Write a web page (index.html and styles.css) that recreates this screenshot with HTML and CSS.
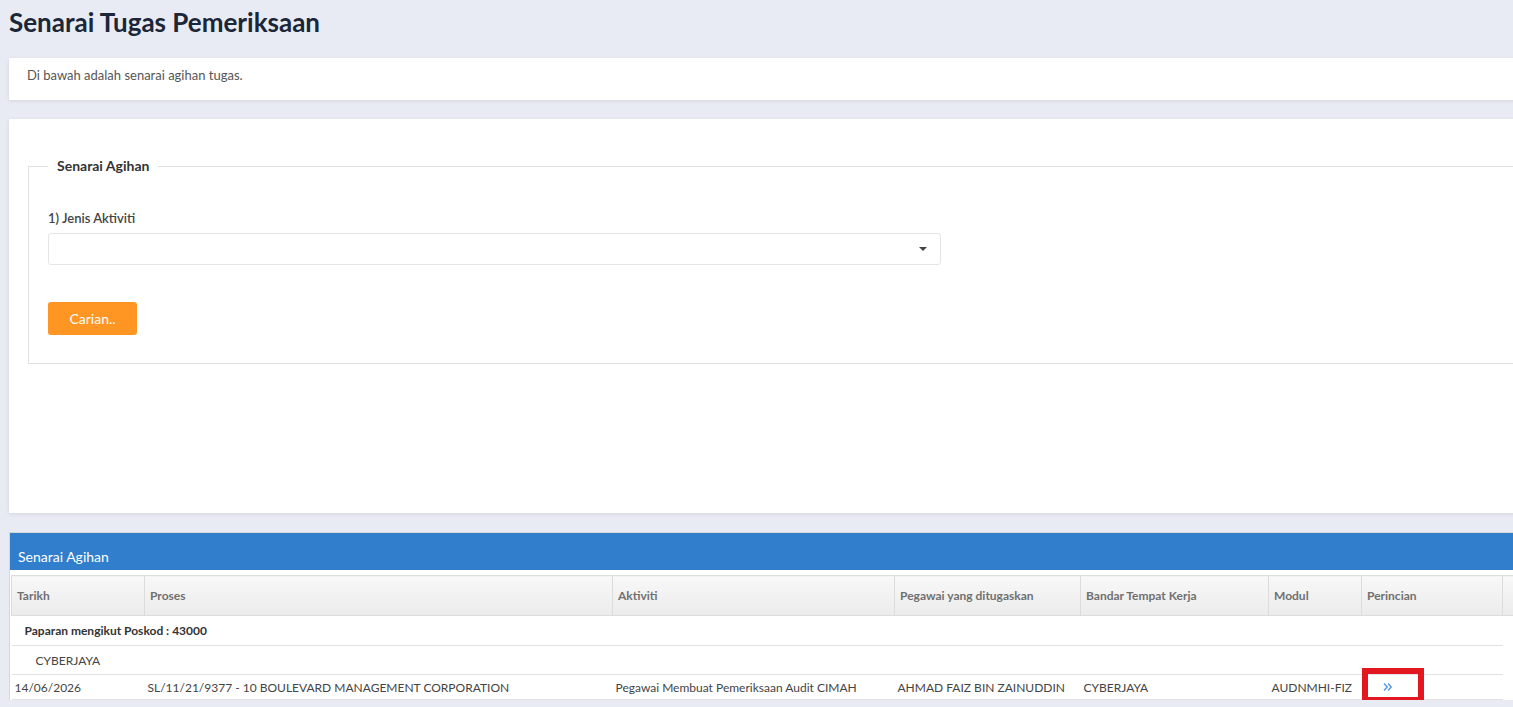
FILE: index.html
```html
<!DOCTYPE html>
<html lang="ms">
<head>
  <meta charset="UTF-8" />
  <meta name="viewport" content="width=device-width, initial-scale=1.0"/>
  <title>Senarai Tugas Pemeriksaan</title>
  <link rel="stylesheet" href="styles.css">
</head>
<body>
  <div class="page">
    <h1 class="page-title">Senarai Tugas Pemeriksaan</h1>

    <div class="card card-intro">Di bawah adalah senarai agihan tugas.</div>

    <div class="card card-search">
      <fieldset class="search-box">
        <legend>Senarai Agihan</legend>
        <label class="field-label" for="jenis">1) Jenis Aktiviti</label>
        <div class="select">
          <select id="jenis"><option></option></select>
          <span class="caret"></span>
        </div>
        <button type="button" class="btn-search">Carian..</button>
      </fieldset>
    </div>

    <div class="panel">
      <div class="panel-heading">Senarai Agihan</div>
      <div class="panel-body">
        <table class="grid">
          <thead>
            <tr>
              <th class="c-tarikh">Tarikh</th>
              <th class="c-proses">Proses</th>
              <th class="c-aktiviti">Aktiviti</th>
              <th class="c-pegawai">Pegawai yang ditugaskan</th>
              <th class="c-bandar">Bandar Tempat Kerja</th>
              <th class="c-modul">Modul</th>
              <th class="c-perincian">Perincian</th>
              <th class="c-gutter"></th>
            </tr>
          </thead>
          <tbody>
            <tr class="row-group">
              <td colspan="7">Paparan mengikut Poskod : 43000</td>
            </tr>
            <tr class="row-sub">
              <td colspan="7">CYBERJAYA</td>
            </tr>
            <tr class="row-data">
              <td>14/06/2026</td>
              <td>SL/11/21/9377 - 10 BOULEVARD MANAGEMENT CORPORATION</td>
              <td>Pegawai Membuat Pemeriksaan Audit CIMAH</td>
              <td>AHMAD FAIZ BIN ZAINUDDIN</td>
              <td>CYBERJAYA</td>
              <td>AUDNMHI-FIZ</td>
              <td class="cell-link">
                <a href="#" class="detail-link">
                  <svg width="10" height="10" viewBox="0 0 10 10"><path d="M1 1.5 4.2 5 1 8.5M5 1.5 8.2 5 5 8.5" fill="none" stroke="#5a9ae6" stroke-width="1.5"/></svg>
                </a>
                <span class="highlight"></span>
              </td>
            </tr>
          </tbody>
        </table>
      </div>
    </div>
  </div>
</body>
</html>
```

FILE: styles.css
```css
html, body { margin: 0; overflow: hidden; }
body { font-family: Lato, "Open Sans", Arial, sans-serif; background: #e8ebf3; color: #444; }
.page { width: 1540px; padding: 4px 0 0 9px; }

.page-title { margin: 0 0 18px; font-size: 26px; line-height: 36px; font-weight: bold; color: #1b2638; }

.card { background: #fff; box-shadow: 0 1px 4px rgba(0, 0, 0, 0.09); }
.card-intro { height: 42px; box-sizing: border-box; padding: 8px 18px 0; font-size: 13px; line-height: 18px; color: #555; margin-bottom: 19px; }
.card-search { padding: 37px 0 149px 19px; }

.search-box { margin: 0; padding: 33px 19px 28px; border: 1px solid #e0e0e0; }
.search-box legend { padding: 0 9px; font-size: 14px; line-height: 20px; font-weight: bold; color: #333; }
.field-label { display: block; font-size: 13px; line-height: 18px; font-weight: 600; color: #444; margin-bottom: 6px; }
.select { position: relative; width: 893px; margin-bottom: 37px; }
.select select { display: block; width: 100%; height: 32px; border: 1px solid #e5e5e5; border-radius: 3px; background: #fff; appearance: none; -webkit-appearance: none; font-family: inherit; }
.select .caret { position: absolute; right: 14px; top: 14px; border-left: 4px solid transparent; border-right: 4px solid transparent; border-top: 4px solid #444; }
.btn-search { display: block; width: 89px; height: 33px; border: none; border-radius: 3px; background: #ff9522; color: #fff; font-family: inherit; font-size: 14px; }

.panel { margin-top: 19px; background: #fff; border-top: 1px solid #d6d6d6; border-left: 1px solid #d6d6d6; }
.panel-heading { height: 37px; box-sizing: border-box; padding: 15px 8px 0; line-height: 18px; font-size: 14px; color: #fff; background: #307ecc; }
.panel-body { padding: 5px 0 0 1px; }

.grid { width: 1511px; border-collapse: collapse; table-layout: fixed; font-size: 12px; }
.grid th { box-sizing: border-box; height: 40px; padding: 0 5px; text-align: left; font-size: 12px; font-weight: bold; color: #707070; background: linear-gradient(#f8f8f8, #ebebeb); border: 1px solid #dcdcdc; }
.grid td { box-sizing: border-box; padding: 0 3px; border-bottom: 1px solid #e2e2e2; white-space: nowrap; }
.c-tarikh { width: 133px; }
.c-proses { width: 468px; }
.c-aktiviti { width: 282px; }
.c-pegawai { width: 186px; }
.c-bandar { width: 188px; }
.c-modul { width: 93px; }
.c-perincian { width: 141px; }
.c-gutter { width: 20px; }

.row-group td { height: 30px; padding-left: 13px; font-weight: bold; color: #333; }
.row-sub td { height: 29px; padding-left: 24px; color: #444; }
.row-data td { height: 25px; color: #444; }
.cell-link { position: relative; }
.detail-link { display: inline-block; margin-left: 18px; line-height: 10px; }
.highlight { position: absolute; left: 0; top: -7px; width: 50px; height: 23px; border: 6px solid #e3171f; }
```
